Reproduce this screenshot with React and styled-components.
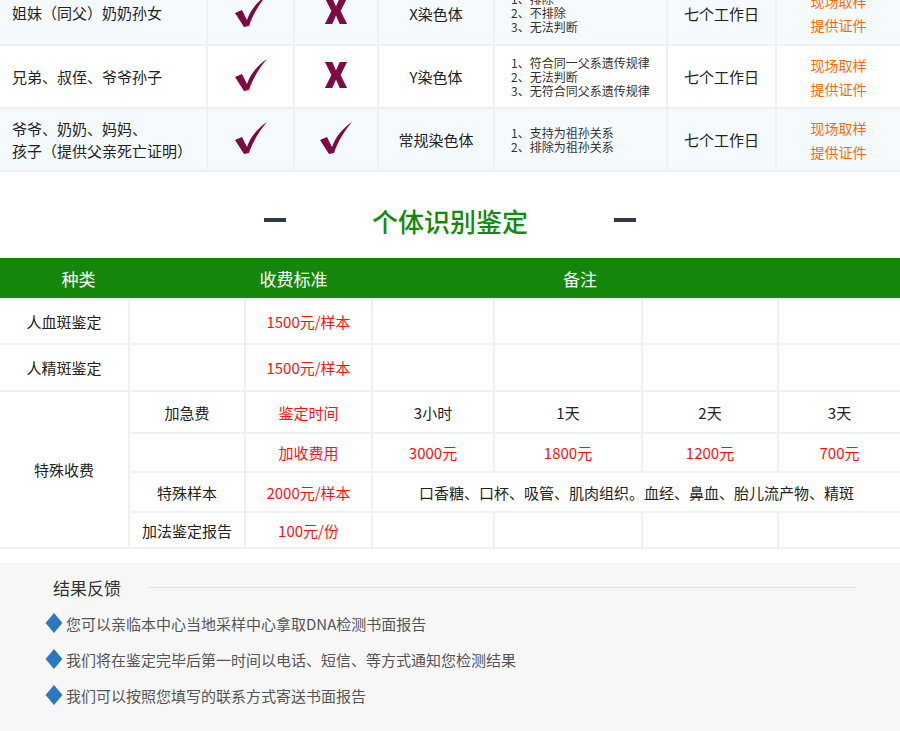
import styled, { createGlobalStyle } from "styled-components";

const Global = createGlobalStyle`
  body { margin: 0; background: #fff; font-family: "Noto Sans CJK SC", "Noto Sans", sans-serif; }
  * { box-sizing: border-box; }
`;

const Page = styled.div`
  width: 900px;
  height: 731px;
  overflow: hidden;
`;

const Table = styled.table`
  width: 900px;
  border-collapse: collapse;
  table-layout: fixed;
  margin-top: ${(p) => p.$top || 0}px;
  td {
    border: 2px solid #eef0f2;
    text-align: center;
    font-size: 15px;
    color: #222;
    padding: 0;
  }
  td:first-child { border-left: none; }
  td:last-child { border-right: none; }
`;

const Row = styled.tr`
  height: ${(p) => p.$h}px;
  background: ${(p) => (p.$alt ? "#f5faff" : "#fff")};
`;

const LeftCell = styled.td`
  && { text-align: left; padding-left: 12px; line-height: 22px; }
`;

const Notes = styled.td`
  && { text-align: left; padding-left: 16px; font-size: 12px; line-height: 14px; color: #333; }
`;

const Orange = styled.td`
  && { color: #ff6a00; line-height: 24px; font-size: 14px; }
`;

const Red = styled.td`
  && { color: #ff1010; }
`;

const Section = styled.div`
  display: flex;
  justify-content: center;
  align-items: center;
  gap: 86px;
  height: 86px;
  padding-top: 10px;
`;

const Dash = styled.span`
  width: 22px;
  height: 4px;
  background: #2e3a4a;
`;

const Title = styled.h2`
  margin: 0;
  font-size: 26px;
  font-weight: 500;
  color: #138a0c;
`;

const Header = styled.div`
  display: flex;
  height: 40px;
  background: #14870a;
  color: #fff;
  font-size: 17px;
  align-items: center;
`;

const HeadCell = styled.div`
  width: ${(p) => p.$w}px;
  text-align: center;
`;

const Feedback = styled.div`
  margin-top: 14px;
  background: #f7f7f7;
  padding: 12px 44px 0 45px;
  height: 172px;
`;

const FbHead = styled.div`
  display: flex;
  align-items: center;
  gap: 28px;
  padding-left: 8px;
  font-size: 17px;
  color: #333;
  &::after {
    content: "";
    flex: 1;
    height: 1px;
    background: #e0e0e0;
  }
`;

const Item = styled.div`
  display: flex;
  align-items: center;
  font-size: 15px;
  color: #555;
  margin-top: 10px;
  height: 26px;
`;

const Diamond = styled.span`
  display: inline-block;
  width: 14px;
  height: 14px;
  background: #2a78c0;
  transform: scaleX(0.85) rotate(45deg);
  margin: 0 5px 0 2px;
`;

const Check = () => (
  <svg width="36" height="36" viewBox="0 0 36 36">
    <path d="M2 20 L9 17 L14 27 C18 16 25 8 34 2 C27 10 20 21 16 33 L11 34 Z" fill="#7d0a46" />
  </svg>
);

const Cross = () => (
  <svg width="24" height="28" viewBox="0 0 26 30">
    <path d="M1 1 H9 L13 10 L17 1 H25 L18 15 L25 29 H17 L13 20 L9 29 H1 L8 15 Z" fill="#7d0a46" />
  </svg>
);

const rows = [
  { a: "姐妹（同父）奶奶孙女", x: false, t: "X染色体", n: ["1、排除", "2、不排除", "3、无法判断"], alt: true },
  { a: "兄弟、叔侄、爷爷孙子", x: false, t: "Y染色体", n: ["1、符合同一父系遗传规律", "2、无法判断", "3、无符合同父系遗传规律"] },
  { a: ["爷爷、奶奶、妈妈、", "孩子（提供父亲死亡证明）"], x: true, t: "常规染色体", n: ["1、支持为祖孙关系", "2、排除为祖孙关系"], alt: true },
];

export default function App() {
  return (
    <Page>
      <Global />
      <Table $top={-20}>
        <colgroup>
          {[207, 87, 84, 116, 173, 109, 124].map((w, i) => <col key={i} style={{ width: w }} />)}
        </colgroup>
        <tbody>
          {rows.map((r, i) => (
            <Row key={i} $alt={r.alt} $h={i === 0 ? 64 : 63}>
              <LeftCell>{Array.isArray(r.a) ? r.a.map((l) => <div key={l}>{l}</div>) : r.a}</LeftCell>
              <td><Check /></td>
              <td>{r.x ? <Check /> : <Cross />}</td>
              <td>{r.t}</td>
              <Notes>{r.n.map((l) => <div key={l}>{l}</div>)}</Notes>
              <td>七个工作日</td>
              <Orange><div>现场取样</div><div>提供证件</div></Orange>
            </Row>
          ))}
        </tbody>
      </Table>
      <Section>
        <Dash />
        <Title>个体识别鉴定</Title>
        <Dash />
      </Section>
      <Header>
        <HeadCell $w={157}>种类</HeadCell>
        <HeadCell $w={273}>收费标准</HeadCell>
        <HeadCell $w={300}>备注</HeadCell>
      </Header>
      <Table>
        <colgroup>
          {[129, 116, 127, 122, 148, 136, 122].map((w, i) => <col key={i} style={{ width: w }} />)}
        </colgroup>
        <tbody>
          <Row $h={45}><td>人血斑鉴定</td><td /><Red>1500元/样本</Red><td /><td /><td /><td /></Row>
          <Row $h={47}><td>人精斑鉴定</td><td /><Red>1500元/样本</Red><td /><td /><td /><td /></Row>
          <Row $h={42}>
            <td rowSpan={4}>特殊收费</td>
            <td>加急费</td><Red>鉴定时间</Red><td>3小时</td><td>1天</td><td>2天</td><td>3天</td>
          </Row>
          <Row $h={39}><td /><Red>加收费用</Red><Red>3000元</Red><Red>1800元</Red><Red>1200元</Red><Red>700元</Red></Row>
          <Row $h={40}><td>特殊样本</td><Red>2000元/样本</Red><td colSpan={4}>口香糖、口杯、吸管、肌肉组织。血经、鼻血、胎儿流产物、精斑</td></Row>
          <Row $h={36}><td>加法鉴定报告</td><Red>100元/份</Red><td /><td /><td /><td /></Row>
        </tbody>
      </Table>
      <Feedback>
        <FbHead>结果反馈</FbHead>
        {["您可以亲临本中心当地采样中心拿取DNA检测书面报告", "我们将在鉴定完毕后第一时间以电话、短信、等方式通知您检测结果", "我们可以按照您填写的联系方式寄送书面报告"].map((t) => (
          <Item key={t}><Diamond />{t}</Item>
        ))}
      </Feedback>
    </Page>
  );
}
